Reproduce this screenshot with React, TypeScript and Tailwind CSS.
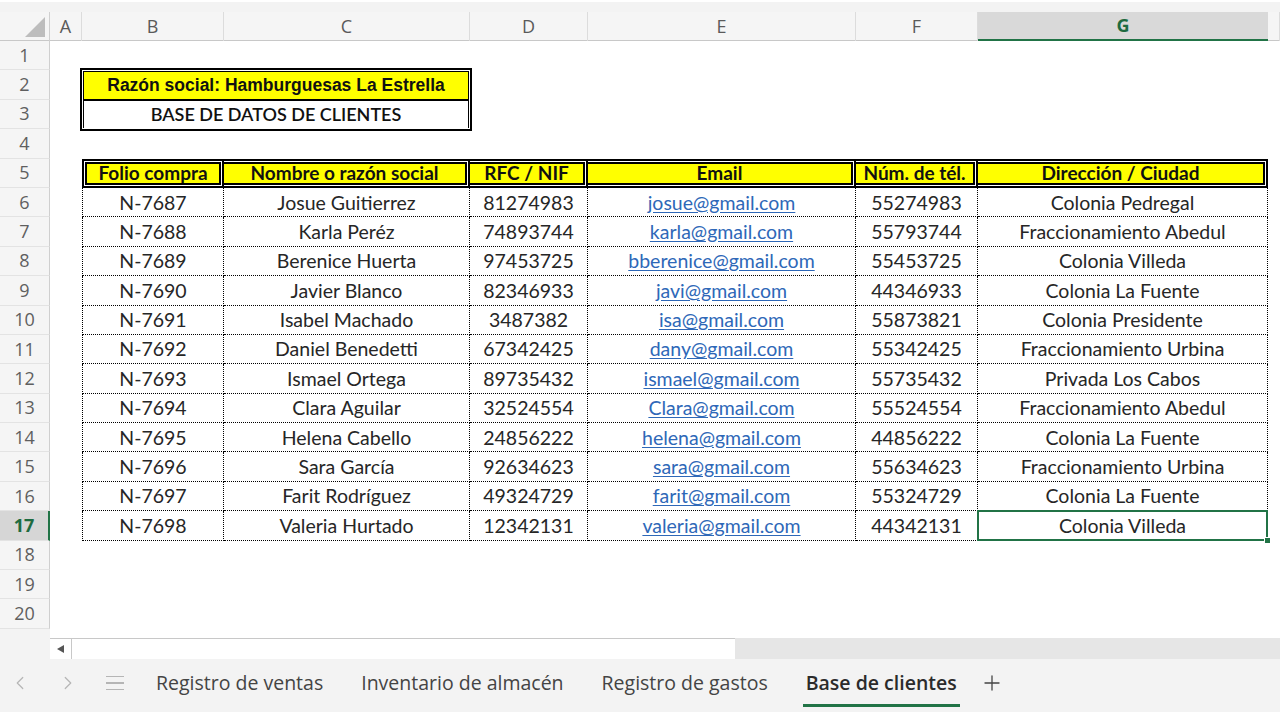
import { ChevronLeft, ChevronRight, Plus } from "lucide-react";

const COLS = ["A", "B", "C", "D", "E", "F", "G", ""];

const HEADERS = ["Folio compra", "Nombre o razón social", "RFC / NIF", "Email", "Núm. de tél.", "Dirección / Ciudad"];

const CLIENTS = [
  ["N-7687", "Josue Guitierrez", "81274983", "josue@gmail.com", "55274983", "Colonia Pedregal"],
  ["N-7688", "Karla Peréz", "74893744", "karla@gmail.com", "55793744", "Fraccionamiento Abedul"],
  ["N-7689", "Berenice Huerta", "97453725", "bberenice@gmail.com", "55453725", "Colonia Villeda"],
  ["N-7690", "Javier Blanco", "82346933", "javi@gmail.com", "44346933", "Colonia La Fuente"],
  ["N-7691", "Isabel Machado", "3487382", "isa@gmail.com", "55873821", "Colonia Presidente"],
  ["N-7692", "Daniel Benedetti", "67342425", "dany@gmail.com", "55342425", "Fraccionamiento Urbina"],
  ["N-7693", "Ismael Ortega", "89735432", "ismael@gmail.com", "55735432", "Privada Los Cabos"],
  ["N-7694", "Clara Aguilar", "32524554", "Clara@gmail.com", "55524554", "Fraccionamiento Abedul"],
  ["N-7695", "Helena Cabello", "24856222", "helena@gmail.com", "44856222", "Colonia La Fuente"],
  ["N-7696", "Sara García", "92634623", "sara@gmail.com", "55634623", "Fraccionamiento Urbina"],
  ["N-7697", "Farit Rodríguez", "49324729", "farit@gmail.com", "55324729", "Colonia La Fuente"],
  ["N-7698", "Valeria Hurtado", "12342131", "valeria@gmail.com", "44342131", "Colonia Villeda"],
];

const TABS = ["Registro de ventas", "Inventario de almacén", "Registro de gastos", "Base de clientes"];

const ui = "font-['Open_Sans','Noto_Sans',sans-serif]";
const calibri = "font-['Lato','Open_Sans',sans-serif]";

function RowHead({ n, active }: { n: number; active?: boolean }) {
  return (
    <div
      className={`flex items-center justify-center border-b border-[#e3e3e3] text-[18px] ${ui} ${
        active
          ? "bg-[#d6d6d6] font-bold text-[#1e6b40] border-r-2 border-r-[#217346]"
          : "bg-[#f5f5f5] text-[#5f5f5f] border-r border-r-[#cfcfcf]"
      }`}
    >
      {n}
    </div>
  );
}

function Empties({ count }: { count: number }) {
  return (
    <>
      {Array.from({ length: count }).map((_, i) => (
        <div key={i} />
      ))}
    </>
  );
}

function TitleBox() {
  return (
    <div className="col-span-2 row-span-2 -mx-[2px] -my-[2px] border-2 border-black bg-white p-[1px]">
      <div className="flex h-full flex-col border border-black">
        <div className="flex flex-1 items-center justify-center border-b-2 border-black bg-[#ffff00] font-['Liberation_Sans',Arial,sans-serif] text-[17.5px] font-bold text-[#111]">
          Razón social: Hamburguesas La Estrella
        </div>
        <div className={`flex flex-1 items-center justify-center bg-white text-[18px] font-semibold text-[#111] ${calibri}`}>
          BASE DE DATOS DE CLIENTES
        </div>
      </div>
    </div>
  );
}

export default function App() {
  const body: React.ReactNode[] = [];

  body.push(<RowHead key="r1" n={1} />, <Empties key="e1" count={8} />);
  body.push(<RowHead key="r2" n={2} />, <div key="a2" />, <TitleBox key="title" />, <Empties key="e2" count={5} />);
  body.push(<RowHead key="r3" n={3} />, <div key="a3" />, <Empties key="e3" count={5} />);
  body.push(<RowHead key="r4" n={4} />, <Empties key="e4" count={8} />);

  body.push(<RowHead key="r5" n={5} />, <div key="a5" />);
  HEADERS.forEach((h, i) => {
    body.push(
      <div
        key={`h${i}`}
        className={`flex items-center justify-center border-y-[5px] border-r-[5px] border-double border-black bg-[#ffff00] bg-clip-padding text-[19px] font-bold text-[#111] ${calibri} ${
          i === 0 ? "border-l-[5px]" : ""
        }`}
      >
        {h}
      </div>
    );
  });
  body.push(<div key="h5" />);

  CLIENTS.forEach((row, r) => {
    const n = r + 6;
    const last = r === CLIENTS.length - 1;
    body.push(<RowHead key={`r${n}`} n={n} active={last} />, <div key={`a${n}`} />);
    row.forEach((v, c) => {
      body.push(
        <div
          key={`c${n}-${c}`}
          className={`relative flex items-center justify-center border-r border-b border-dotted border-black text-[19.5px] ${calibri} ${
            c === 0 ? "border-l" : ""
          } ${c === 3 ? "text-[#2e68b8] underline underline-offset-2" : "text-[#262626]"}`}
        >
          {v}
          {last && c === 5 && (
            <div className="absolute -left-[1px] -top-[1px] -right-[1px] -bottom-[1px] border-2 border-[#217346]">
              <div className="absolute -bottom-[5px] -right-[5px] h-[7px] w-[7px] border border-white bg-[#217346]" />
            </div>
          )}
        </div>
      );
    });
    body.push(<div key={`h${n}`} />);
  });

  [18, 19, 20].forEach((n) => body.push(<RowHead key={`r${n}`} n={n} />, <Empties key={`e${n}`} count={8} />));

  return (
    <div className="flex h-[712px] w-[1280px] flex-col overflow-hidden bg-white">
      {/* strip under formula bar */}
      <div className="h-[12px] border-t-2 border-white bg-[#f3f3f3]" />

      {/* column letters */}
      <div className="grid h-[29px] grid-cols-[50px_32px_142px_246px_118px_268px_122px_290px_1fr] border-b border-[#c8c8c8] bg-[#f5f5f5]">
        <div className="flex items-end justify-end border-r border-[#cfcfcf] pb-[4px] pr-[4px]">
          <svg width="20" height="20" viewBox="0 0 20 20">
            <polygon points="20,0 20,20 0,20" fill="#bdbdbd" />
          </svg>
        </div>
        {COLS.map((c, i) => (
          <div
            key={i}
            className={`flex items-center justify-center text-[18px] ${ui} ${
              c === "G"
                ? "border-b-2 border-[#217346] bg-[#d9d9d9] font-bold text-[#1e6b40]"
                : "border-r border-[#dcdcdc] text-[#5a5a5a]"
            }`}
          >
            {c}
          </div>
        ))}
      </div>

      {/* sheet */}
      <div className="grid grid-cols-[50px_32px_142px_246px_118px_268px_122px_290px_1fr] grid-rows-[repeat(20,29.4px)]">
        {body}
      </div>

      {/* horizontal scroll */}
      <div className="flex h-[30px]">
        <div className="w-[50px] bg-[#f3f3f3]" />
        <div className="flex flex-1 flex-col">
          <div className="h-[9px] bg-white" />
          <div className="flex flex-1">
            <div className="flex w-[22px] items-center justify-center border-t border-r border-[#c8c8c8] bg-white">
              <svg width="7" height="8" viewBox="0 0 7 8">
                <polygon points="7,0 7,8 0,4" fill="#555" />
              </svg>
            </div>
            <div className="w-[663px] border-t border-[#c8c8c8] bg-white" />
            <div className="flex-1 bg-[#e6e6e6]" />
          </div>
        </div>
      </div>

      {/* sheet tabs */}
      <div className={`flex flex-1 items-center bg-[#f3f3f3] ${ui}`}>
        <div className="flex w-[137px] items-center pb-[5px] pl-[8px] text-[#b5b5b5]">
          <div className="flex w-[24px] justify-center">
            <ChevronLeft size={22} strokeWidth={1.3} />
          </div>
          <div className="ml-[24px] flex w-[24px] justify-center">
            <ChevronRight size={22} strokeWidth={1.3} />
          </div>
          <div className="ml-[23px] flex w-[24px] flex-col items-center gap-[5px]">
            <div className="h-[1.5px] w-[18px] bg-[#b5b5b5]" />
            <div className="h-[1.5px] w-[18px] bg-[#b5b5b5]" />
            <div className="h-[1.5px] w-[18px] bg-[#b5b5b5]" />
          </div>
        </div>
        {TABS.map((t) => {
          const active = t === "Base de clientes";
          return (
            <div key={t} className="relative flex h-full items-center px-[19px] pb-[5px]">
              <span className={`text-[19.5px] ${active ? "font-semibold text-[#2b2b2b]" : "text-[#444]"}`}>{t}</span>
              {active && <div className="absolute bottom-[5px] left-[16px] right-[16px] h-[3px] bg-[#217346]" />}
            </div>
          );
        })}
        <div className="ml-[4px] pb-[5px] text-[#444]">
          <Plus size={24} strokeWidth={1.3} />
        </div>
      </div>
    </div>
  );
}
